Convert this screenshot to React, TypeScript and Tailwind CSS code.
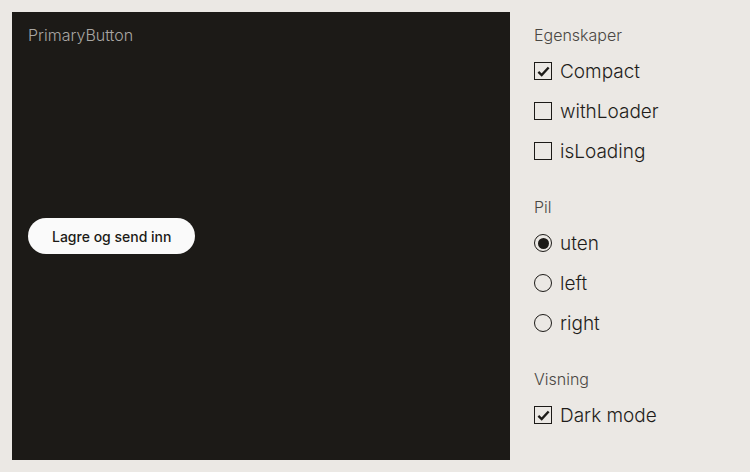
import React from "react";

const font = { fontFamily: "Inter, 'Noto Sans', sans-serif" };

function Check({ checked, label }: { checked: boolean; label: string }) {
  return (
    <div className="flex items-center h-[40px]">
      <div className="w-[18px] h-[18px] border-[1.5px] border-[#1c1a17] flex items-center justify-center">
        {checked && (
          <svg width="15" height="15" viewBox="0 0 14 14">
            <path d="M2.2 7.4 L5.3 10.4 L11.8 3.2" fill="none" stroke="#1c1a17" strokeWidth="2.2" />
          </svg>
        )}
      </div>
      <span className="ml-[8px] text-[19px] font-light text-[#1f1d1a] leading-none">{label}</span>
    </div>
  );
}

function Radio({ checked, label }: { checked: boolean; label: string }) {
  return (
    <div className="flex items-center h-[40px]">
      <div className="w-[18px] h-[18px] rounded-full border-[1.5px] border-[#1c1a17] flex items-center justify-center">
        {checked && <div className="w-[11px] h-[11px] rounded-full bg-[#1c1a17]" />}
      </div>
      <span className="ml-[8px] text-[19px] font-light text-[#1f1d1a] leading-none">{label}</span>
    </div>
  );
}

function Heading({ children }: { children: React.ReactNode }) {
  return <div className="h-[24px] flex items-center text-[16px] font-light text-[#4a4743]">{children}</div>;
}

export default function App() {
  return (
    <div style={font} className="w-[750px] h-[472px] bg-[#ebe8e4] flex p-[12px]">
      <div className="w-[498px] h-[448px] bg-[#1c1a17] flex flex-col px-[16px] pt-[12px]">
        <div className="h-[22px] flex items-center text-[16px] font-light text-[#a8a6a3]">PrimaryButton</div>
        <div className="flex-1 flex items-center pb-[34px]">
          <div className="h-[36px] px-[24px] rounded-full bg-[#fafafa] flex items-center text-[14px] font-medium text-[#1c1a17]">
            Lagre og send inn
          </div>
        </div>
      </div>
      <div className="ml-[24px] flex flex-col pt-[11px]">
        <Heading>Egenskaper</Heading>
        <div className="mt-[4px]">
          <Check checked label="Compact" />
          <Check checked={false} label="withLoader" />
          <Check checked={false} label="isLoading" />
        </div>
        <div className="mt-[24px]">
          <Heading>Pil</Heading>
        </div>
        <div className="mt-[4px]">
          <Radio checked label="uten" />
          <Radio checked={false} label="left" />
          <Radio checked={false} label="right" />
        </div>
        <div className="mt-[24px]">
          <Heading>Visning</Heading>
        </div>
        <div className="mt-[4px]">
          <Check checked label="Dark mode" />
        </div>
      </div>
    </div>
  );
}
